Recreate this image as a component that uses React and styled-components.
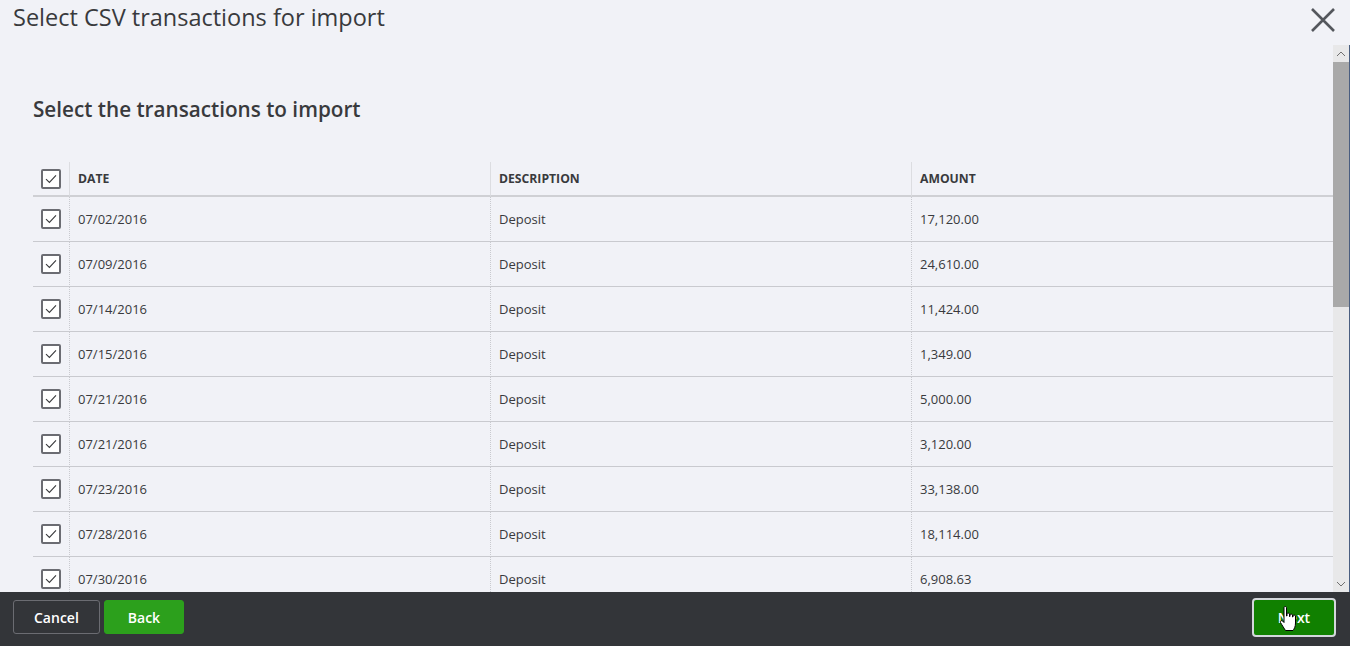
import React from 'react'
import styled, { createGlobalStyle } from 'styled-components'

const GlobalStyle = createGlobalStyle`
  html, body {
    margin: 0;
    padding: 0;
    background: #f1f2f7;
    font-family: "Open Sans", Lato, Arial, sans-serif;
    color: #393a3d;
    overflow: hidden;
  }
`

const Page = styled.div`
  width: 1350px;
  height: 646px;
  display: flex;
  flex-direction: column;
  background: #f1f2f7;
  position: relative;
`

const TitleBar = styled.div`
  height: 45px;
  flex: none;
  display: flex;
  align-items: flex-start;
  justify-content: space-between;
  padding: 0 14px 0 13px;
`

const Title = styled.h1`
  margin: 2px 0 0;
  font-size: 23.5px;
  font-weight: 400;
  line-height: 30px;
  color: #393a3d;
`

const Close = styled.button`
  border: none;
  background: none;
  padding: 0;
  margin-top: 7px;
  width: 26px;
  height: 26px;
  cursor: pointer;
`

const Body = styled.div`
  flex: 1;
  display: flex;
  min-height: 0;
`

const Scroller = styled.div`
  flex: 1;
  overflow: hidden;
  padding: 52px 0 0 33px;
`

const Heading = styled.h2`
  margin: 0 0 41px;
  font-size: 20.7px;
  font-weight: 600;
  line-height: 24px;
  color: #393a3d;
`

const Table = styled.div`
  display: grid;
  grid-template-columns: 36px 421px 421px 1fr;
`

const HeadCell = styled.div`
  height: 33px;
  display: flex;
  align-items: center;
  padding-left: 8px;
  border-bottom: 2px solid #cfd0d4;
  border-left: ${p => (p.$first ? 'none' : '1px solid #dcdde1')};
  font-size: 12.2px;
  font-weight: 700;
  text-transform: uppercase;
  color: #393a3d;
`

const Cell = styled.div`
  height: 44px;
  display: flex;
  align-items: center;
  padding-left: 8px;
  border-bottom: 1px solid #c9cacf;
  border-left: ${p => (p.$first ? 'none' : '1px dotted #c9cacf')};
  font-size: 13px;
  color: #393a3d;
`

const Box = styled.span`
  width: 16px;
  height: 16px;
  border: 2px solid #6b6c72;
  border-radius: 2px;
  background: #fff;
  display: flex;
  align-items: center;
  justify-content: center;
`

const Scrollbar = styled.div`
  width: 16px;
  flex: none;
  background: #e8e8e9;
  display: flex;
  flex-direction: column;
  border-right: 1px solid #4a5e80;
`

const Arrow = styled.div`
  height: 17px;
  display: flex;
  align-items: center;
  justify-content: center;
`

const Thumb = styled.div`
  height: 245px;
  background: #a9a9a9;
`

const Track = styled.div`
  flex: 1;
`

const Footer = styled.div`
  height: 54px;
  flex: none;
  box-sizing: border-box;
  background: #333539;
  display: flex;
  align-items: center;
  padding: 0 14px 4px 13px;
  gap: 4px;
`

const Button = styled.button`
  height: 34px;
  padding: 0 ${p => p.$pad || 20}px;
  border-radius: 3px;
  font-family: "Open Sans", Lato, Arial, sans-serif;
  font-size: 14px;
  font-weight: 600;
  color: #fff;
  cursor: pointer;
  border: 1px solid ${p => (p.$green ? '#2ca01c' : '#6b6c72')};
  background: ${p => (p.$green ? '#2ca01c' : 'transparent')};
`

const Primary = styled(Button)`
  margin-left: auto;
  height: 39px;
  width: 84px;
  background: #108000;
  border: 2px solid #d4d7dc;
  border-radius: 4px;
`

const Pointer = styled.svg`
  position: absolute;
  left: 1279px;
  top: 605px;
  pointer-events: none;
`

const rows = [
  ['07/02/2016', 'Deposit', '17,120.00'],
  ['07/09/2016', 'Deposit', '24,610.00'],
  ['07/14/2016', 'Deposit', '11,424.00'],
  ['07/15/2016', 'Deposit', '1,349.00'],
  ['07/21/2016', 'Deposit', '5,000.00'],
  ['07/21/2016', 'Deposit', '3,120.00'],
  ['07/23/2016', 'Deposit', '33,138.00'],
  ['07/28/2016', 'Deposit', '18,114.00'],
  ['07/30/2016', 'Deposit', '6,908.63'],
]

const Check = () => (
  <Box>
    <svg width="14" height="14" viewBox="0 0 14 14">
      <path d="M2 7.2 L5.4 10.4 L12 3.4" fill="none" stroke="#393a3d" strokeWidth="1.1" />
    </svg>
  </Box>
)

export default function App() {
  return (
    <Page>
      <GlobalStyle />
      <TitleBar>
        <Title>Select CSV transactions for import</Title>
        <Close aria-label="Close">
          <svg width="26" height="26" viewBox="0 0 26 26">
            <path d="M2 2 L24 24 M24 2 L2 24" stroke="#54575d" strokeWidth="2.6" />
          </svg>
        </Close>
      </TitleBar>
      <Body>
        <Scroller>
          <Heading>Select the transactions to import</Heading>
          <Table>
            <HeadCell $first><Check /></HeadCell>
            <HeadCell>Date</HeadCell>
            <HeadCell>Description</HeadCell>
            <HeadCell>Amount</HeadCell>
            {rows.map((r, i) => (
              <React.Fragment key={i}>
                <Cell $first><Check /></Cell>
                <Cell>{r[0]}</Cell>
                <Cell>{r[1]}</Cell>
                <Cell>{r[2]}</Cell>
              </React.Fragment>
            ))}
          </Table>
        </Scroller>
        <Scrollbar>
          <Arrow>
            <svg width="10" height="6" viewBox="0 0 10 6">
              <path d="M1 5 L5 1 L9 5" fill="none" stroke="#707070" strokeWidth="1" />
            </svg>
          </Arrow>
          <Thumb />
          <Track />
          <Arrow>
            <svg width="10" height="6" viewBox="0 0 10 6">
              <path d="M1 1 L5 5 L9 1" fill="none" stroke="#707070" strokeWidth="1" />
            </svg>
          </Arrow>
        </Scrollbar>
      </Body>
      <Footer>
        <Button $pad={20}>Cancel</Button>
        <Button $green $pad={23}>Back</Button>
        <Primary>Next</Primary>
      </Footer>
      <Pointer width="20" height="28" viewBox="0 0 20 28">
        <path
          d="M5 2.5 C5 1.2 7.5 1.2 7.5 2.5 L7.5 11 L8 11 L8 9 C8 7.8 10.5 7.8 10.5 9 L10.5 11.5 L11 11.5 L11 10 C11 8.8 13.5 8.8 13.5 10 L13.5 12 L14 12 L14 11 C14 9.8 16.5 9.8 16.5 11 L16.5 18 C16.5 22 15 24 14 25.5 L6.5 25.5 C5.5 24 3 20 1.5 17.5 C0.8 16.2 2.5 15 3.6 16 L5 17.5 Z"
          fill="#fff"
          stroke="#000"
          strokeWidth="1"
          strokeLinejoin="round"
        />
      </Pointer>
    </Page>
  )
}
